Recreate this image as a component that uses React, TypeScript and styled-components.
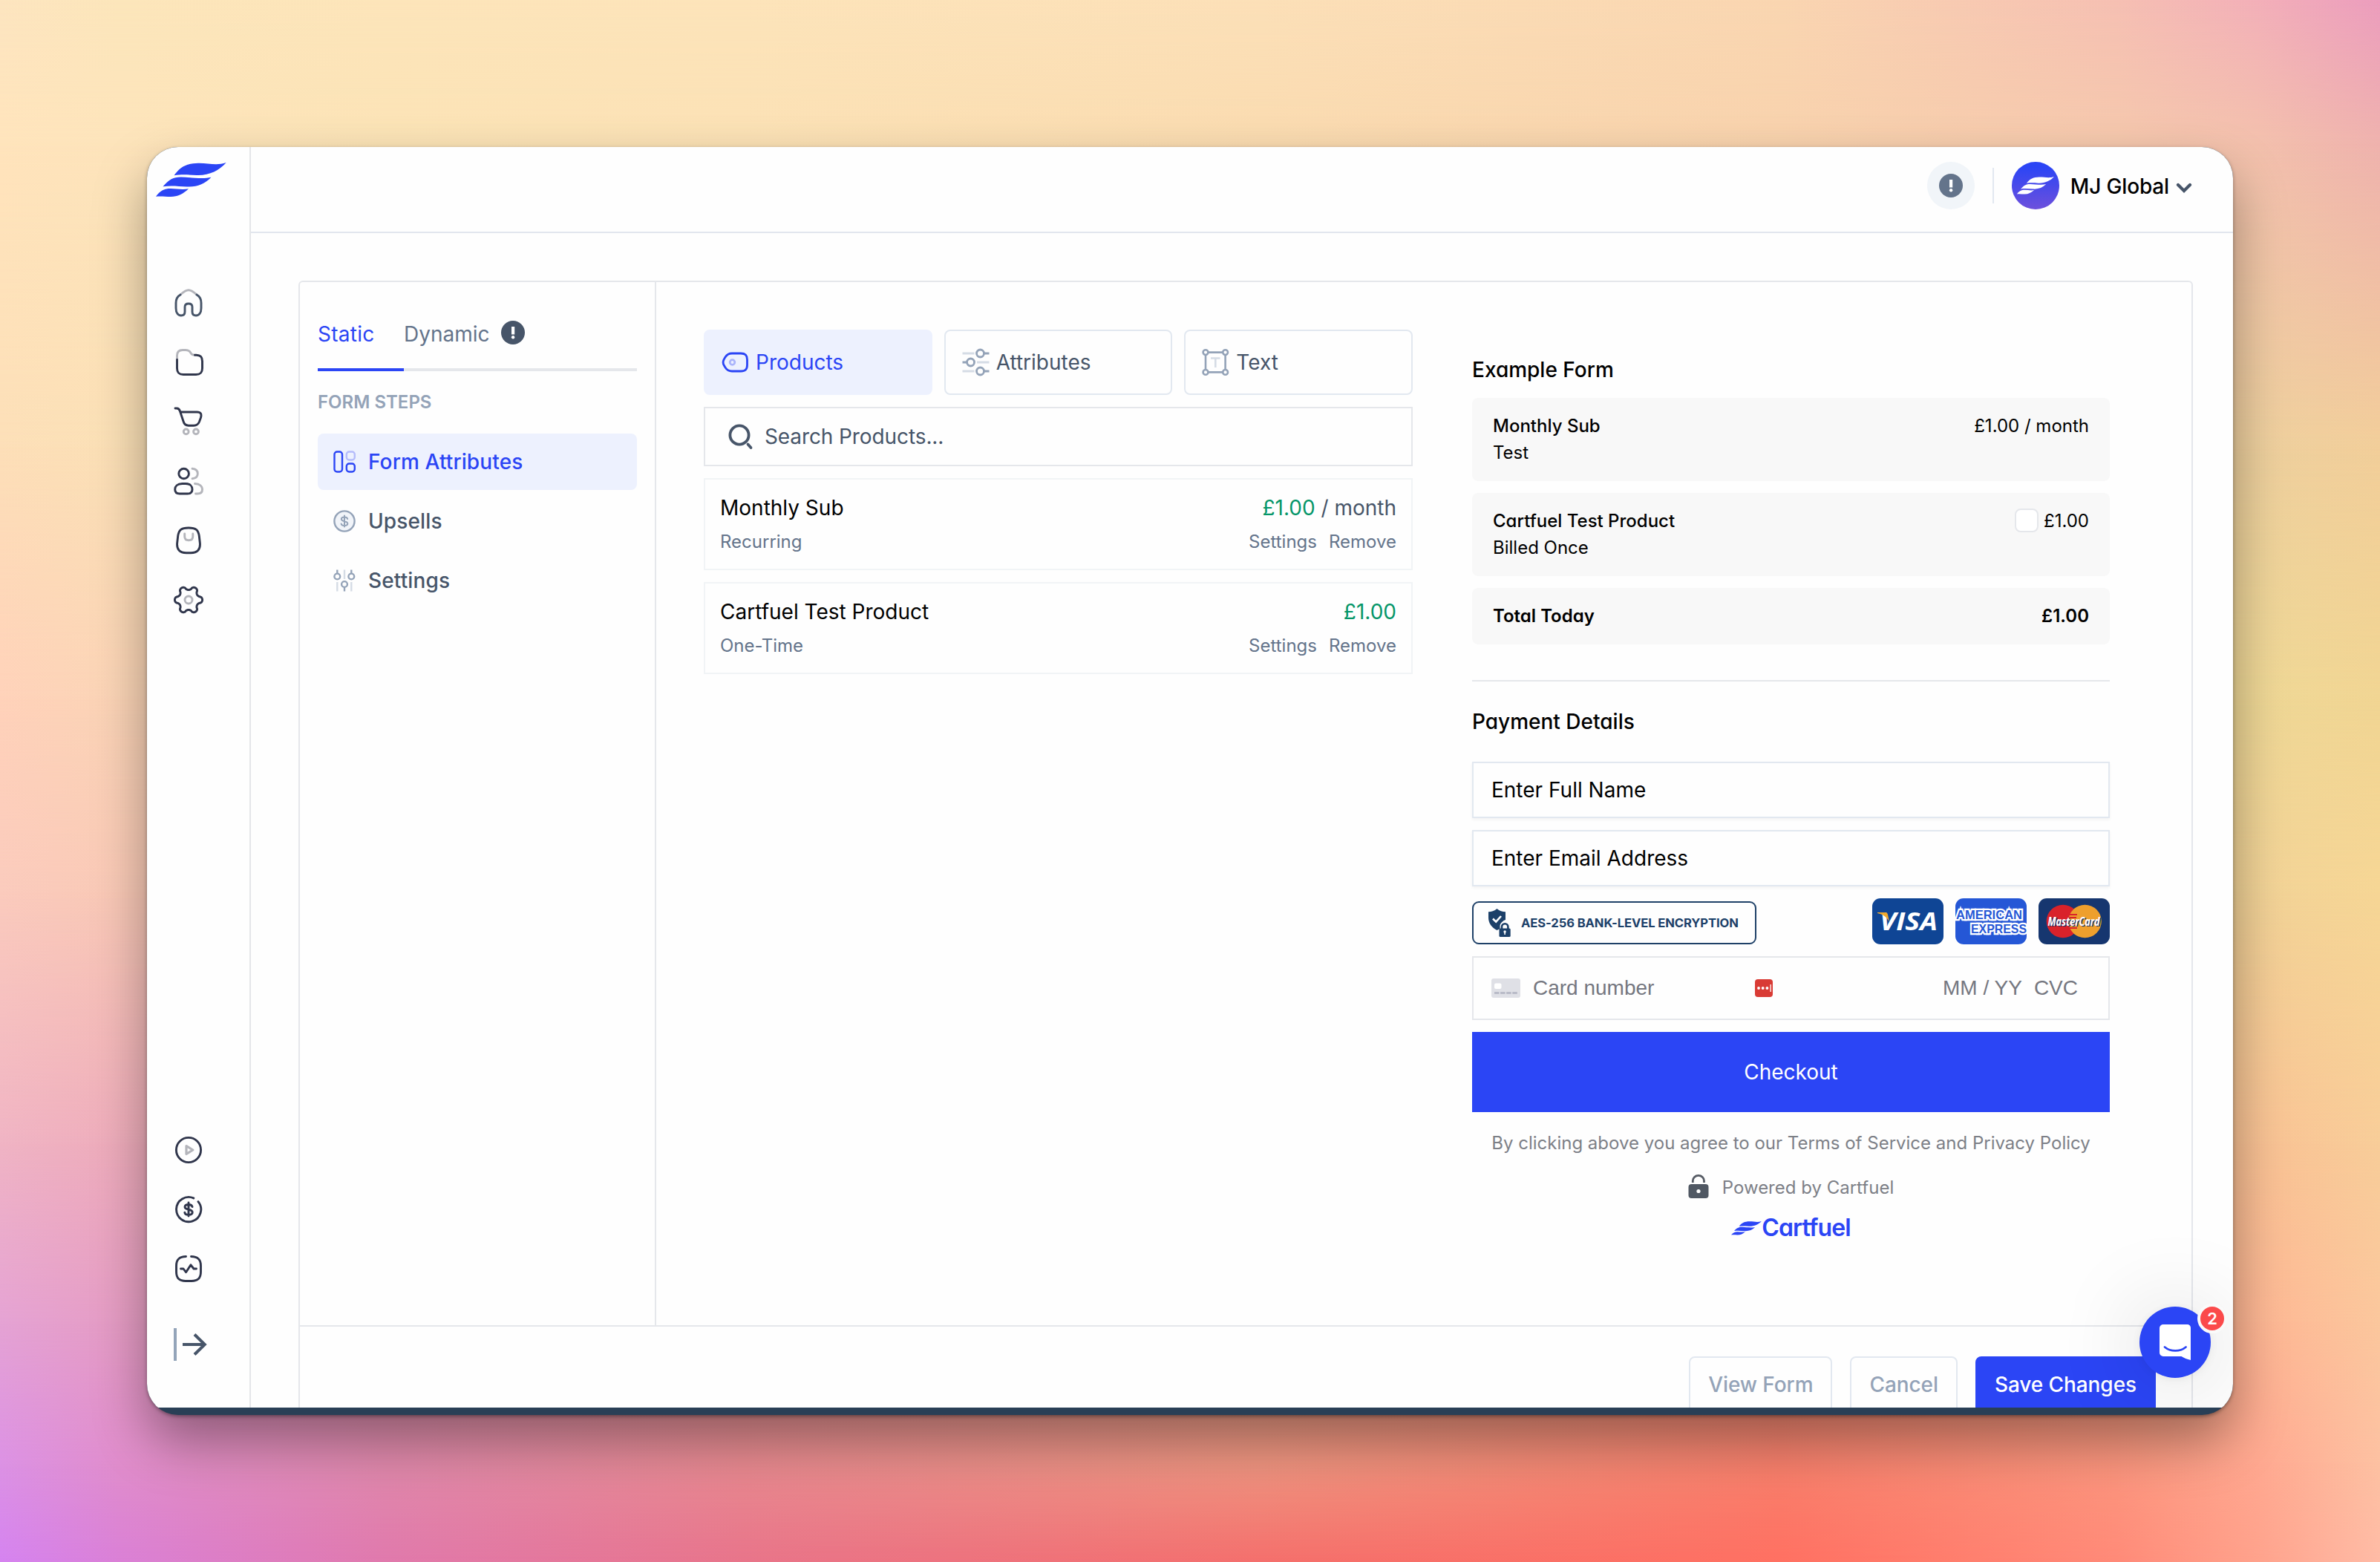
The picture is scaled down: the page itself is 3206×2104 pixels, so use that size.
import React from 'react';
import styled, { createGlobalStyle } from 'styled-components';

const BLUE = '#2b45f5';
const INK = '#30364c';
const SLATE = '#475569';
const MUTED = '#94a3b8';
const FAINT = '#b4b5bb';
const LINE = '#e5e7eb';

const GlobalStyle = createGlobalStyle`
  * { box-sizing: border-box; }
  html, body { margin: 0; padding: 0; }
  body {
    width: 3206px;
    height: 2104px;
    overflow: hidden;
    font-family: Inter, "Liberation Sans", sans-serif;
    font-size: 28px;
    line-height: 40px;
    color: #000;
  }
  svg { display: block; flex: none; overflow: visible; }
`;

/* ---------- gradient wallpaper ---------- */

const MESH_X = [0, 160, 520, 1000, 1700, 2400, 2850, 3040, 3206];
const MESH: [number, string[]][] = [
  [0, ['#fde5c0', '#fce6bb', '#fde5ba', '#fde4ba', '#fce0b8', '#fad6b1', '#f6c0b3', '#f3b0b9', '#ec9dbe']],
  [190, ['#ffe4bc', '#fde4bb', '#fbe3b6', '#fbe1b5', '#fadbb0', '#f8d2ad', '#f5c8ad', '#f3c0ad', '#efb2ae']],
  [600, ['#fddfb8', '#fbe0b6', '#fbdfb5', '#fbdfb5', '#f9dab0', '#f5d3a8', '#efd09f', '#eed09e', '#f2ce9a']],
  [940, ['#ffd2ba', '#fbd4b6', '#fbd4b5', '#fbd8b0', '#f9d8a8', '#f3d6a0', '#efd896', '#efd896', '#f1d593']],
  [1200, ['#fbcbbd', '#f9c9b6', '#f9c8b5', '#f9ccb0', '#f9cca8', '#f3cf9e', '#f0d296', '#f2d397', '#f6d695']],
  [1540, ['#f0b4c4', '#eeacbb', '#ebaab5', '#f0aca8', '#f0b29c', '#f4b090', '#f7ba90', '#f9c294', '#f8cd99']],
  [1780, ['#e5a3d4', '#e59cc4', '#df98b0', '#e39c9c', '#eaa48c', '#f29a80', '#faa688', '#feb794', '#fbc79d']],
  [1970, ['#dc92e4', '#e08dcc', '#e089ac', '#e88a90', '#ef9580', '#f8806c', '#fc967e', '#ffa890', '#fdc1a2']],
  [2104, ['#d583f0', '#da80d6', '#e079ac', '#e8748a', '#f46f6c', '#ff7062', '#ff8a78', '#ffa28c', '#ffbba6']],
];

const Desktop = styled.div`
  position: relative;
  width: 3206px;
  height: 2104px;
  overflow: hidden;
  display: flex;
  padding: 198px;
`;

const MeshRow = styled.div<{ $colors: string[]; $from: number; $to: number }>`
  position: absolute;
  inset: 0;
  background: linear-gradient(
    to right,
    ${(p) => p.$colors.map((c, i) => `${c} ${MESH_X[i]}px`).join(', ')}
  );
  mask-image: ${(p) =>
    p.$to === 0 ? 'none' : `linear-gradient(to bottom, transparent ${p.$from}px, #000 ${p.$to}px)`};
`;

/* ---------- window ---------- */

const Window = styled.div`
  position: relative;
  width: 2810px;
  height: 1708px;
  border-radius: 42px;
  background: #293f56;
  box-shadow:
    0 2px 5px rgba(0, 0, 0, 0.36),
    0 36px 70px rgba(0, 0, 0, 0.36);
`;

const Clip = styled.div`
  height: 100%;
  border-radius: 42px;
  overflow: hidden;
`;

const Screen = styled.div`
  position: relative;
  height: 1698px;
  display: flex;
  background: #fefefe;
  overflow: hidden;
`;

const Sidebar = styled.aside`
  width: 140px;
  flex: none;
  display: flex;
  flex-direction: column;
  padding: 21px 0 61px 12px;
  border-right: 2px solid #e4e6e9;
`;

const Nav = styled.nav<{ $gap: number }>`
  display: flex;
  flex-direction: column;
  gap: 32px;
  padding-left: 20px;
  margin-top: ${(p) => p.$gap}px;
`;

const NavEnd = styled(Nav)`
  margin-top: auto;
`;

const Main = styled.main`
  flex: 1;
  display: flex;
  flex-direction: column;
  min-width: 0;
`;

const Header = styled.header`
  height: 116px;
  flex: none;
  display: flex;
  justify-content: flex-end;
  align-items: center;
  padding: 0 54px 10px 0;
  border-bottom: 2px solid #e2e6ee;
`;

const AlertButton = styled.div`
  width: 64px;
  height: 64px;
  border-radius: 50%;
  display: grid;
  place-items: center;
  background: #f1f5f9;
`;

const HeaderRule = styled.div`
  width: 2px;
  height: 48px;
  margin: 0 24px;
  background: #e2e8f0;
`;

const Avatar = styled.div`
  width: 64px;
  height: 64px;
  border-radius: 50%;
  display: grid;
  place-items: center;
  background: linear-gradient(#2b45f5 10%, #6d50dc);
`;

const Account = styled.div`
  margin: 2px 8px 0 15px;
  font-weight: 500;
  letter-spacing: -0.15px;
`;

/* ---------- panel ---------- */

const Panel = styled.section`
  flex: 1;
  display: flex;
  flex-direction: column;
  margin: 64px 54px 0 64px;
  border: 2px solid ${LINE};
  border-bottom: 0;
  border-radius: 6px 6px 0 0;
`;

const PanelBody = styled.div`
  height: 1407px;
  flex: none;
  display: flex;
  border-bottom: 2px solid ${LINE};
`;

const Steps = styled.div`
  width: 480px;
  flex: none;
  padding: 50px 24px 0;
  border-right: 2px solid ${LINE};
`;

const StepTabs = styled.div`
  display: flex;
  height: 70px;
`;

const StepTab = styled.div<{ $active?: boolean }>`
  display: flex;
  align-items: flex-start;
  gap: 15px;
  width: ${(p) => (p.$active ? '116px' : 'auto')};
  flex: ${(p) => (p.$active ? 'none' : '1')};
  border-bottom: 4px solid ${(p) => (p.$active ? BLUE : LINE)};
  color: ${(p) => (p.$active ? BLUE : '#64748b')};
  letter-spacing: ${(p) => (p.$active ? '0.25px' : '0')};
`;

const InfoDot = styled.span`
  padding-top: 2px;
`;

const StepsTitle = styled.div`
  margin: 26px 0 26px;
  font-size: 24px;
  line-height: 32px;
  font-weight: 600;
  color: ${MUTED};
`;

const StepList = styled.div`
  display: flex;
  flex-direction: column;
  gap: 4px;
`;

const Step = styled.div<{ $active?: boolean }>`
  height: 76px;
  display: flex;
  align-items: center;
  gap: 16px;
  padding-left: 20px;
  border-radius: 8px;
  font-weight: 500;
  letter-spacing: 0.12px;
  color: ${(p) => (p.$active ? BLUE : SLATE)};
  background: ${(p) => (p.$active ? '#edf1fe' : 'transparent')};
`;

const Editor = styled.div`
  width: 955px;
  flex: none;
  margin: 64px 80px 0 64px;
  display: flex;
  flex-direction: column;
  gap: 16px;
`;

const Kinds = styled.div`
  display: grid;
  grid-template-columns: repeat(3, 1fr);
  gap: 16px;
`;

const Kind = styled.div<{ $active?: boolean }>`
  height: 88px;
  display: flex;
  align-items: center;
  gap: 9px;
  padding-left: 22px;
  border: 2px solid ${(p) => (p.$active ? '#edf1fe' : '#e2e8f0')};
  border-radius: 8px;
  color: ${(p) => (p.$active ? BLUE : SLATE)};
  background: ${(p) => (p.$active ? '#edf1fe' : 'transparent')};
`;

const Search = styled.div`
  height: 80px;
  display: flex;
  align-items: center;
  gap: 14px;
  padding-left: 30px;
  border: 2px solid ${LINE};
  color: ${SLATE};
  letter-spacing: -0.1px;
`;

const Product = styled.div`
  height: 124px;
  padding: 18px 20px;
  border: 2px solid #f1f4f6;
`;

const Spread = styled.div`
  display: flex;
  justify-content: space-between;
`;

const ProductPrice = styled.div`
  color: ${SLATE};
  b {
    font-weight: 400;
    color: #059669;
  }
`;

const ProductMeta = styled(Spread)`
  margin-top: 8px;
  font-size: 24px;
  line-height: 36px;
  color: #64748b;
`;

const Actions = styled.div`
  display: flex;
  gap: 16px;
`;

/* ---------- form preview ---------- */

const Preview = styled.div`
  width: 859px;
  flex: none;
  padding-top: 98px;
`;

const PreviewTitle = styled.div<{ $after: number }>`
  font-weight: 500;
  font-feature-settings: 'cv11';
  margin-bottom: ${(p) => p.$after}px;
`;

const Line = styled.div<{ $total?: boolean }>`
  height: ${(p) => (p.$total ? 76 : 112)}px;
  margin-bottom: 16px;
  padding: 20px 28px 0;
  display: flex;
  justify-content: space-between;
  border-radius: 8px;
  background: #f8f8f8;
  font-size: 24px;
  line-height: 36px;
  font-weight: ${(p) => (p.$total ? 600 : 400)};
  font-feature-settings: 'cv11';
`;

const LineName = styled.div`
  font-weight: 500;
`;

const LinePrice = styled.div`
  display: flex;
  align-items: flex-start;
`;

const Checkbox = styled.span`
  width: 32px;
  height: 32px;
  margin: 1px 7px 0 0;
  border: 2px solid #e5e7eb;
  border-radius: 8px;
  background: #fff;
`;

const Divider = styled.div`
  height: 2px;
  margin: 48px 0 34px;
  background: #e5e7eb;
`;

const Field = styled.div`
  height: 76px;
  margin-bottom: 16px;
  padding-left: 24px;
  display: flex;
  align-items: center;
  border: 2px solid #e2e8f0;
  box-shadow: 0 2px 4px rgba(0, 0, 0, 0.05);
`;

const TrustRow = styled.div`
  height: 62px;
  margin-bottom: 16px;
  display: flex;
  align-items: flex-end;
  justify-content: space-between;
`;

const Encryption = styled.div`
  width: 383px;
  height: 58px;
  display: flex;
  align-items: center;
  gap: 14px;
  padding-left: 20px;
  border: 2px solid #1f4168;
  border-radius: 9px;
  color: #1c4069;
  font-size: 16.6px;
  font-weight: 700;
  letter-spacing: -0.1px;
  white-space: nowrap;
`;

const Brands = styled.div`
  display: flex;
  gap: 16px;
`;

const CardField = styled.div`
  height: 86px;
  margin-bottom: 16px;
  padding: 0 41px 0 24px;
  display: flex;
  align-items: center;
  border: 2px solid ${LINE};
  font-family: "Liberation Sans", Arial, sans-serif;
  font-size: 28px;
  color: #757780;
`;

const CardNumber = styled.span`
  width: 299px;
  margin-left: 17px;
`;

const Expiry = styled.span`
  margin-left: auto;
  margin-right: 16px;
`;

const Checkout = styled.div`
  height: 108px;
  display: grid;
  place-items: center;
  background: ${BLUE};
  color: #fff;
`;

const Legal = styled.div`
  margin-top: 24px;
  display: flex;
  justify-content: center;
  gap: 18px;
  font-size: 24px;
  line-height: 36px;
  color: #7d8087;
  white-space: nowrap;
`;

const Brand = styled.div`
  margin-top: 16px;
  display: flex;
  justify-content: center;
  align-items: center;
  font-size: 32px;
  font-weight: 600;
  font-feature-settings: 'cv11';
  letter-spacing: -0.9px;
  color: ${BLUE};
`;

/* ---------- footer ---------- */

const Footer = styled.div`
  display: flex;
  justify-content: flex-end;
  gap: 24px;
  padding: 40px 48px 0 0;
`;

const Button = styled.div<{ $primary?: boolean }>`
  height: 76px;
  flex: none;
  padding: 0 24px;
  display: flex;
  align-items: center;
  border: 2px solid ${(p) => (p.$primary ? BLUE : '#e2e8f0')};
  border-radius: 8px;
  font-weight: 500;
  letter-spacing: -0.08px;
  color: ${(p) => (p.$primary ? '#fff' : MUTED)};
  background: ${(p) => (p.$primary ? BLUE : 'transparent')};
`;

const Chat = styled.div`
  position: absolute;
  right: 30px;
  bottom: 40px;
  width: 96px;
  height: 96px;
  border-radius: 50%;
  display: grid;
  place-items: center;
  background: ${BLUE};
  box-shadow:
    0 2px 12px rgba(0, 0, 0, 0.06),
    0 4px 120px rgba(0, 0, 0, 0.18);
`;

const Unread = styled.div`
  position: absolute;
  top: -4px;
  right: -22px;
  width: 40px;
  height: 40px;
  border: 4px solid #fafafa;
  border-radius: 50%;
  background: #fb4a4b;
  color: #fff;
  font-size: 22px;
  line-height: 32px;
  font-weight: 600;
  text-align: center;
`;

/* ---------- icons ---------- */

const Leaves = ({ width, height, color }: { width: number; height: number; color: string }) => (
  <svg width={width} height={height} viewBox="0 0 95 47" preserveAspectRatio="none" fill={color}>
    <path d="M24.5 17.2C33 5 42 1 57 .8c14-.2 25 3.8 37.700-.8C85 11 72 17.400 55 16.900c-12-.400-20-1.200-30.500.3z" />
    <path d="M9.500 32.200C18 22.500 24 19.200 34 19.400c14 .4 28 3.400 40.500.4C66 29 55 33.200 42 32.500 30 31.800 20 30.600 9.500 32.200z" />
    <path d="M0 45.800C6 37.500 12 34.800 20 35c8 .2 16 2 24 .200C37 42 29 46 20 46 13 46 6 44.800 0 45.800z" />
  </svg>
);

const NavIcon = ({ children, color = INK }: { children: React.ReactNode; color?: string }) => (
  <svg width="48" height="48" viewBox="0 0 48 48" fill="none" stroke={color} strokeWidth="2.900" strokeLinecap="round" strokeLinejoin="round">
    {children}
  </svg>
);

const gearPath = (() => {
  const points: string[] = [];
  for (let i = 0; i < 180; i++) {
    const t = (i / 180) * Math.PI * 2;
    const wave = Math.cos(6 * t);
    const r = 16 + 2.6 * Math.sign(wave) * Math.pow(Math.abs(wave), 0.6);
    points.push(`${(24 + r * Math.cos(t)).toFixed(2)} ${(24 + r * Math.sin(t)).toFixed(2)}`);
  }
  return `M${points.join('L')}Z`;
})();

const Dollar = () => (
  <path d="M29 20.500C28.500 18.500 27 17.500 24 17.500S19 18.600 19 20.800s2 2.800 5 3.400 5.200 1.400 5.200 3.800-2.200 3.300-5.200 3.300-5-1.200-5.200-3.200M24 15v18" />
);

const Alert = ({ color }: { color: string }) => (
  <svg width="32" height="32" viewBox="0 0 32 32">
    <circle cx="16" cy="16" r="16" fill={color} />
    <rect x="14" y="8" width="4.200" height="10.500" fill="#fff" />
    <circle cx="16.100" cy="22.200" r="2.200" fill="#fff" />
  </svg>
);

const Shield = () => (
  <svg width="30" height="38" viewBox="0 0 30 38">
    <path d="M11.500 0 C15 3 19 4 23 4.300V15C20 16 16 19 15.500 23V27L11.500 29C4 25 0 19 0 12V4.300C4 4 8 3 11.500 0z" fill="#1c4069" />
    <path d="M6 13.500l4.200 4.200L17 10" fill="none" stroke="#fff" strokeWidth="2.600" />
    <path d="M18 28v-3.500a4.200 4.200 0 0 1 8.400 0V28" fill="none" stroke="#1c4069" strokeWidth="2.600" />
    <rect x="14.500" y="26.500" width="15.200" height="11.500" rx="1.500" fill="#1c4069" />
    <circle cx="22.100" cy="31" r="1.700" fill="#fff" />
    <rect x="21.300" y="31" width="1.600" height="4" fill="#fff" />
  </svg>
);

const Visa = () => (
  <svg width="96" height="62" viewBox="0 0 96 62">
    <rect width="96" height="62" rx="11" fill="#0f4595" />
    <text x="49" y="43" textAnchor="middle" textLength="78" lengthAdjust="spacingAndGlyphs" fontFamily="Open Sans" fontWeight="700" fontStyle="italic" fontSize="34" fill="#fff">VISA</text>
    <path d="M7 19h10.500c2 0 3 .8 3.500 3l2 9.500C19.500 25 14 21.500 7 20z" fill="#f0a92e" />
  </svg>
);

const Amex = () => (
  <svg width="96" height="62" viewBox="0 0 96 62">
    <defs>
      <clipPath id="amex"><rect width="96" height="62" rx="11" /></clipPath>
    </defs>
    <g clipPath="url(#amex)" fontFamily="Liberation Sans" fontWeight="700" fontSize="16.500" fill="#2557d6" stroke="#fff" strokeWidth="4.500" paintOrder="stroke">
      <rect width="96" height="62" stroke="none" />
      <text x="1" y="28" textLength="89" lengthAdjust="spacingAndGlyphs">AMERICAN</text>
      <text x="21" y="46.500" textLength="75" lengthAdjust="spacingAndGlyphs">EXPRESS</text>
    </g>
  </svg>
);

const Mastercard = () => (
  <svg width="96" height="62" viewBox="0 0 96 62">
    <rect width="96" height="62" rx="11" fill="#16366f" />
    <circle cx="33" cy="31" r="22.300" fill="#d9222a" />
    <circle cx="62.500" cy="31" r="22.300" fill="#ee9f2d" />
    <path d="M41 22h11M40 26h11M40 36h11M41 40h11" stroke="#d9222a" strokeWidth="2" />
    <g fontFamily="Open Sans" fontWeight="700" fontStyle="italic" fontSize="16.500">
      <text x="14" y="38" textLength="70" lengthAdjust="spacingAndGlyphs" fill="#16366f">MasterCard</text>
      <text x="12.500" y="37" textLength="70" lengthAdjust="spacingAndGlyphs" fill="#fff">MasterCard</text>
    </g>
  </svg>
);

const products = [
  { name: 'Monthly Sub', price: '£1.00', per: ' / month', kind: 'Recurring' },
  { name: 'Cartfuel Test Product', price: '£1.00', per: '', kind: 'One-Time' },
];

export default function App() {
  return (
    <Desktop>
      <GlobalStyle />
      {MESH.map(([y, colors], i) => (
        <MeshRow key={y} $colors={colors} $from={i ? MESH[i - 1][0] : 0} $to={y} />
      ))}
      <Window>
        <Clip>
          <Screen>
            <Sidebar>
              <Leaves width={95} height={47} color={BLUE} />
              <Nav $gap={118}>
                <NavIcon color={SLATE}>
                  <path stroke={FAINT} d="M13.500 12.500C18 8.500 21 6.700 24 6.700s6 1.800 10.500 5.800" />
                  <path d="M13 13C8.500 15.500 7 19 7 24v7c0 6 2.500 10 7 10 3.500 0 5-1.500 5-5v-6.500c0-3 2-4.500 5-4.500s5 1.500 5 4.500V36c0 3.500 1.500 5 5 5 4.500 0 7-4 7-10v-7c0-5-1.500-8.500-6-11" />
                </NavIcon>
                <NavIcon>
                  <path stroke={FAINT} d="M8.500 20v-5c0-5 2.500-7.500 7.500-7.500h4c4 0 5.500 1 7 4 1 2.300 2.500 2.700 5 2.700" />
                  <path d="M8.500 20.500V32c0 6 2.500 8.500 8.500 8.500h17c6 0 8.500-2.500 8.500-8.500v-9.500c0-5.500-2.500-8.300-8-8.300H32.500" />
                </NavIcon>
                <NavIcon>
                  <path d="M6 6h2c2.500 0 3.800 1.500 4.500 4L17 23.500c1 3.700 3 5.700 7 5.700h7c4 0 6-1.500 7.500-5.200l2-5.500c1.400-5-.2-7.500-5-7.500H13" />
                  <circle stroke={FAINT} cx="20.700" cy="37.400" r="3.400" />
                  <circle stroke={FAINT} cx="34" cy="37.400" r="3.400" />
                </NavIcon>
                <NavIcon>
                  <circle cx="17.600" cy="14" r="6.800" />
                  <path d="M15.500 27.500h4.500c6 0 9 3.500 9 7.800 0 4-2.500 5.700-6.500 5.700H12c-4 0-6.300-1.700-6.300-5.700 0-4.300 3.300-7.800 9.800-7.800z" />
                  <g stroke={FAINT}>
                    <path d="M29 7.300c4.500.4 7.300 3 7.300 6.700S33.500 20.300 29 20.700" />
                    <path d="M32.500 27.500c6.500.2 10 3.500 10 8 0 3.800-2.500 5.500-6.500 5.500h-2.500" />
                  </g>
                </NavIcon>
                <NavIcon>
                  <path d="M24 7c10 0 13 2.500 14.300 11l1 9c1 9-3.300 13.800-12.300 13.800h-6C12 40.800 7.700 36 8.700 27l1-9C11 9.500 14 7 24 7z" />
                  <path stroke={FAINT} d="M18.700 15v3.500c0 3.500 2 5.300 5.500 5.300s5.600-1.800 5.600-5.300V15" />
                </NavIcon>
                <NavIcon>
                  <path d={gearPath} />
                  <circle stroke={FAINT} cx="24" cy="24" r="5" />
                </NavIcon>
              </Nav>
              <NavEnd $gap={0}>
                <NavIcon>
                  <circle cx="24" cy="24" r="16.600" />
                  <path stroke={FAINT} strokeWidth="3.200" d="M21 18.500L29.800 24 21 29.500z" />
                </NavIcon>
                <NavIcon>
                  <path d="M30.800 8.900A16.600 16.600 0 1 0 37 13.600" />
                  <Dollar />
                </NavIcon>
                <NavIcon>
                  <path d="M20.500 7.500C11.500 7.700 7.500 11.500 7.500 20v8c0 9 4 12.500 12.500 12.500h8c8.500 0 12.500-3.500 12.500-12.500v-8c0-8.500-4-12.300-13-12.500" />
                  <path d="M13.500 24H17l3.500 4.700L27 18.800 31 24h3.500" />
                </NavIcon>
              </NavEnd>
              <Nav $gap={54}>
                <NavIcon color={SLATE}>
                  <path stroke="#93a4b9" strokeWidth="4" strokeLinecap="butt" d="M6 2v44" />
                  <path strokeWidth="4" strokeLinecap="butt" strokeLinejoin="miter" d="M16 24h30M32 10.500L45.800 24 32 37.500" />
                </NavIcon>
              </Nav>
            </Sidebar>

            <Main>
              <Header>
                <AlertButton><Alert color="#64748b" /></AlertButton>
                <HeaderRule />
                <Avatar><Leaves width={50} height={24} color="#fff" /></Avatar>
                <Account>MJ Global</Account>
                <svg width="24" height="24" viewBox="0 0 24 24" fill="none" stroke={SLATE} strokeWidth="4.200" strokeLinecap="round">
                  <path d="M4 11l8 8 8-8" />
                </svg>
              </Header>

              <Panel>
                <PanelBody>
                  <Steps>
                    <StepTabs>
                      <StepTab $active>Static</StepTab>
                      <StepTab>Dynamic<InfoDot><Alert color={SLATE} /></InfoDot></StepTab>
                    </StepTabs>
                    <StepsTitle>FORM STEPS</StepsTitle>
                    <StepList>
                      <Step $active>
                        <svg width="32" height="32" viewBox="0 0 32 32" fill="none" stroke={BLUE} strokeWidth="2.400">
                          <rect x="2.500" y="2.500" width="10.500" height="27" rx="3.500" />
                          <rect x="18.800" y="18.500" width="11" height="11" rx="3.500" />
                          <rect x="18.800" y="2.500" width="11" height="11" rx="3.500" stroke="#b5bcfb" />
                        </svg>
                        Form Attributes
                      </Step>
                      <Step>
                        <svg width="32" height="32" viewBox="0 0 32 32" fill="none" stroke={MUTED} strokeWidth="2.400" strokeLinecap="round">
                          <circle cx="16" cy="16" r="13.600" fill="#f1f4f9" />
                          <g transform="translate(-4 -4) scale(.833)"><Dollar /></g>
                        </svg>
                        Upsells
                      </Step>
                      <Step>
                        <svg width="32" height="32" viewBox="0 0 32 32" fill="none" stroke={MUTED} strokeWidth="2.400">
                          <circle cx="6.300" cy="10.500" r="3.900" />
                          <circle cx="25.300" cy="10.500" r="3.900" />
                          <circle cx="16" cy="21" r="3.900" />
                          <path d="M6.300 1.500v5M25.300 1.500v5M16 25v5.500" />
                          <path stroke="#d5dce5" d="M6.300 18v12.500M25.300 18v12.500M16 1.500V14" />
                        </svg>
                        Settings
                      </Step>
                    </StepList>
                  </Steps>

                  <Editor>
                    <Kinds>
                      <Kind $active>
                        <svg width="37" height="36" viewBox="0 0 37 36" fill="none" stroke={BLUE} strokeWidth="2.800" strokeLinejoin="round">
                          <path d="M14 6h12c6 0 8.500 2.500 8.500 8.500v7c0 6-2.500 8.500-8.500 8.500H14c-4 0-6.800-1.500-9-5l-1.500-2.500c-1.900-3-1.900-6 0-9L5 11c2.200-3.500 5-5 9-5z" />
                          <circle cx="14.500" cy="18" r="3.300" stroke="#aab4fb" />
                        </svg>
                        Products
                      </Kind>
                      <Kind>
                        <svg width="37" height="36" viewBox="0 0 37 36" fill="none" stroke={MUTED} strokeWidth="2.800">
                          <circle cx="24.500" cy="6" r="5" />
                          <circle cx="11.500" cy="18" r="5" />
                          <circle cx="24.500" cy="30" r="5" />
                          <path d="M29.500 6h7M.5 18h6M29.500 30h7" />
                          <path stroke="#d5dce5" d="M.5 6h16M20 18h16.500M.5 30h16" />
                        </svg>
                        Attributes
                      </Kind>
                      <Kind>
                        <svg width="37" height="36" viewBox="0 0 37 36" fill="none" stroke={MUTED} strokeWidth="2.600">
                          <circle cx="5" cy="4.600" r="3.400" />
                          <circle cx="31.600" cy="4.600" r="3.400" />
                          <circle cx="5" cy="31.400" r="3.400" />
                          <circle cx="31.600" cy="31.400" r="3.400" />
                          <path d="M8.500 4.600h19.500M8.500 31.400h19.500M5 8v20M31.600 8v20" />
                          <path stroke="#d5dce5" d="M12 12.500h12.500M18.300 12.500v12.500" />
                        </svg>
                        Text
                      </Kind>
                    </Kinds>

                    <Search>
                      <svg width="36" height="36" viewBox="0 0 36 36" fill="none" stroke={SLATE} strokeWidth="3.800" strokeLinecap="round">
                        <circle cx="16" cy="16" r="12.600" />
                        <path d="M27.500 28.500l4 4.500" />
                      </svg>
                      Search Products...
                    </Search>

                    {products.map((p) => (
                      <Product key={p.name}>
                        <Spread>
                          <div>{p.name}</div>
                          <ProductPrice><b>{p.price}</b>{p.per}</ProductPrice>
                        </Spread>
                        <ProductMeta>
                          <div>{p.kind}</div>
                          <Actions><span>Settings</span><span>Remove</span></Actions>
                        </ProductMeta>
                      </Product>
                    ))}
                  </Editor>

                  <Preview>
                    <PreviewTitle $after={18}>Example Form</PreviewTitle>
                    <Line>
                      <div><LineName>Monthly Sub</LineName>Test</div>
                      <LinePrice>£1.00 / month</LinePrice>
                    </Line>
                    <Line>
                      <div><LineName>Cartfuel Test Product</LineName>Billed Once</div>
                      <LinePrice><Checkbox />£1.00</LinePrice>
                    </Line>
                    <Line $total>
                      <div>Total Today</div>
                      <LinePrice>£1.00</LinePrice>
                    </Line>
                    <Divider />
                    <PreviewTitle $after={34}>Payment Details</PreviewTitle>
                    <Field>Enter Full Name</Field>
                    <Field>Enter Email Address</Field>
                    <TrustRow>
                      <Encryption><Shield />AES-256 BANK-LEVEL ENCRYPTION</Encryption>
                      <Brands><Visa /><Amex /><Mastercard /></Brands>
                    </TrustRow>
                    <CardField>
                      <svg width="39" height="26" viewBox="0 0 39 26">
                        <rect width="39" height="26" rx="3" fill="#dfe0e6" />
                        <rect x="4" y="6.500" width="9.500" height="7.500" rx="2" fill="#fff" />
                        <path d="M4 19.500h31" stroke="#b9bbc8" strokeWidth="3" strokeDasharray="6.500 1.600" />
                      </svg>
                      <CardNumber>Card number</CardNumber>
                      <svg width="24" height="24" viewBox="0 0 24 24" fill="#fff">
                        <rect width="24" height="24" rx="4" fill="#d93b35" />
                        <circle cx="5" cy="12" r="1.900" />
                        <circle cx="10.700" cy="12" r="1.900" />
                        <circle cx="16.400" cy="12" r="1.900" />
                        <rect x="20.500" y="7" width="1.300" height="10" />
                      </svg>
                      <Expiry>MM / YY</Expiry>
                      <span>CVC</span>
                    </CardField>
                    <Checkout>Checkout</Checkout>
                    <Legal>By clicking above you agree to our Terms of Service and Privacy Policy</Legal>
                    <Legal>
                      <svg width="28" height="32" viewBox="0 0 28 32">
                        <path d="M6.300 11V8.500a7.600 7.200 0 0 1 15.200 0V11" fill="none" stroke="#565b64" strokeWidth="2.800" />
                        <rect x=".5" y="13" width="27" height="19" rx="4" fill="#505863" />
                        <circle cx="14" cy="22.500" r="2.600" fill="#fff" />
                      </svg>
                      Powered by Cartfuel
                    </Legal>
                    <Brand>
                      <Leaves width={41} height={19} color={BLUE} />
                      Cartfuel
                    </Brand>
                  </Preview>
                </PanelBody>

                <Footer>
                  <Button>View Form</Button>
                  <Button>Cancel</Button>
                  <Button $primary>Save Changes</Button>
                </Footer>
              </Panel>
            </Main>

            <Chat>
              <svg width="42" height="48" viewBox="0 0 42 48">
                <path d="M5 0h32.500a4.500 4.500 0 0 1 4.500 4.500V48c-5-1-9-3-12.500-5H5a5 5 0 0 1-5-5V5a5 5 0 0 1 5-5z" fill="#fff" />
                <path d="M7 30.500c8 6.600 20.500 6.600 28.500 0" fill="none" stroke={BLUE} strokeWidth="2.800" strokeLinecap="round" />
              </svg>
              <Unread>2</Unread>
            </Chat>
          </Screen>
        </Clip>
      </Window>
    </Desktop>
  );
}
